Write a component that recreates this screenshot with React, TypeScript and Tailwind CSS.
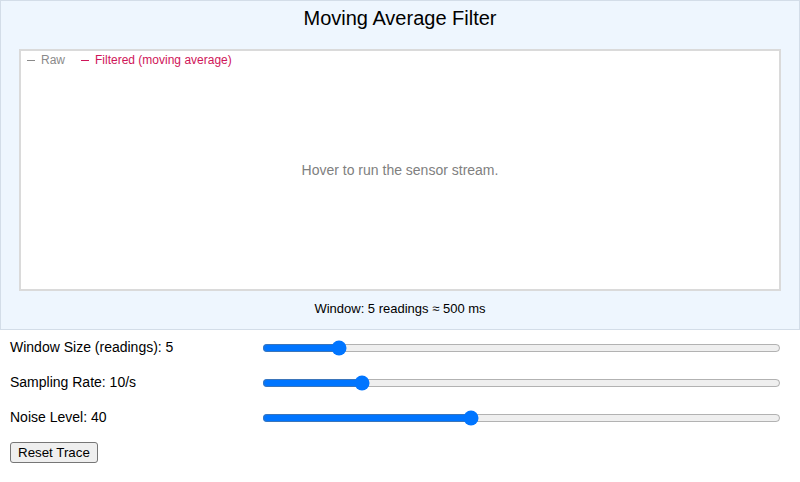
import React from "react";

export default function App() {
  const font = { fontFamily: '"Liberation Sans", Arial, Helvetica, sans-serif' };
  return (
    <div className="w-[800px] h-[482px] bg-white text-black" style={font}>
      <div className="border border-[#d3dde8] bg-[#eef6fe] px-[18px] pt-[5px] pb-[12px]">
        <div className="text-center text-[20px] leading-[24px]">Moving Average Filter</div>
        <div className="relative mt-[19px] h-[242px] border-2 border-[#dadada] bg-white flex items-center justify-center">
          <div className="absolute left-[6px] top-[1px] flex gap-[16px] text-[12px] leading-[16px]">
            <span className="flex items-center text-[#8a8a8a]">
              <span className="inline-block w-[8px] h-px bg-current mr-[6px]" />
              Raw
            </span>
            <span className="flex items-center text-[#cf1559]">
              <span className="inline-block w-[8px] h-px bg-current mr-[6px]" />
              Filtered (moving average)
            </span>
          </div>
          <span className="text-[14px] text-[#808080]">Hover to run the sensor stream.</span>
        </div>
        <div className="mt-[10px] text-center text-[13px] leading-[16px]">Window: 5 readings ≈ 500 ms</div>
      </div>
      <div className="pl-[10px] pr-[17px]">
        <div className="flex items-center h-[35px]">
          <span className="w-[250px] text-[14px]">Window Size (readings): 5</span>
          <input type="range" min={1} max={30} defaultValue={5} className="flex-1 mx-[2px]" />
        </div>
        <div className="flex items-center h-[35px]">
          <span className="w-[250px] text-[14px]">Sampling Rate: 10/s</span>
          <input type="range" min={1} max={50} defaultValue={10} className="flex-1 mx-[2px]" />
        </div>
        <div className="flex items-center h-[35px]">
          <span className="w-[250px] text-[14px]">Noise Level: 40</span>
          <input type="range" min={0} max={100} defaultValue={40} className="flex-1 mx-[2px]" />
        </div>
        <div className="flex items-center h-[35px]">
          <button className="border border-[#767676] bg-[#efefef] rounded-[3px] px-[7px] py-[2px] text-[13.33px] leading-[15px]">
            Reset Trace
          </button>
        </div>
      </div>
    </div>
  );
}
